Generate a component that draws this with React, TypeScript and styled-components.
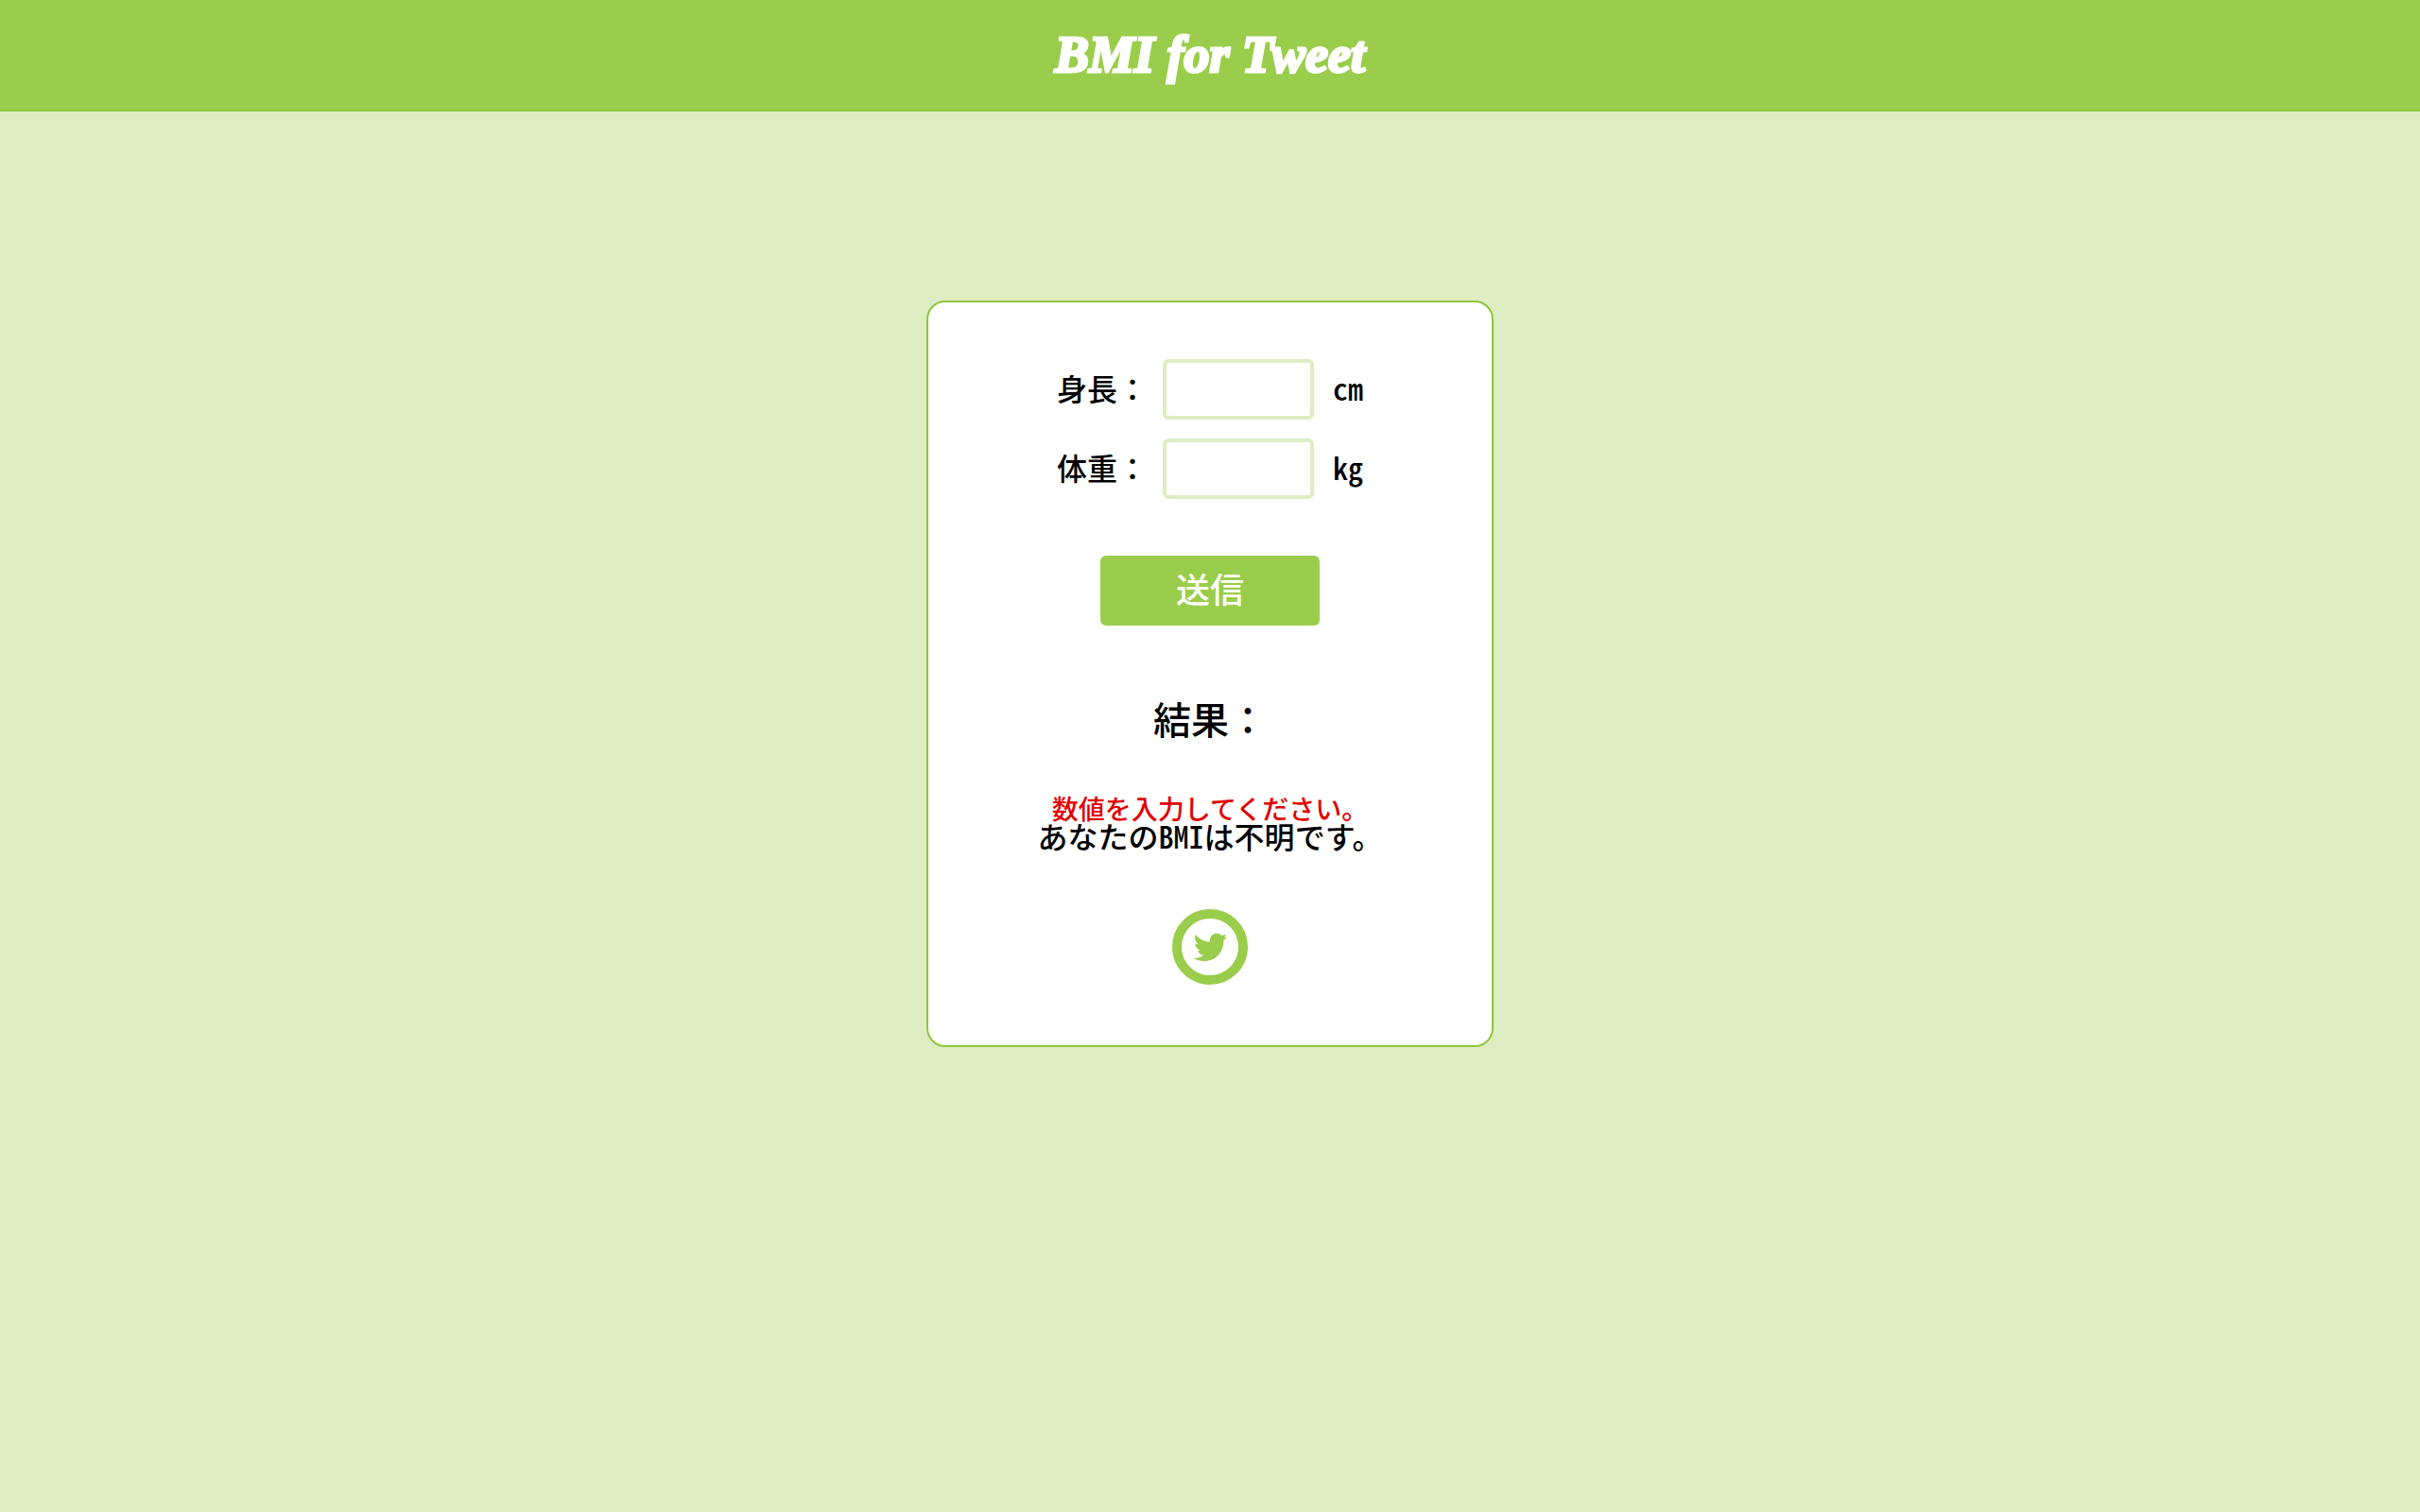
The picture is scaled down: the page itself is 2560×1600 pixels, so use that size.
import { useState } from "react";
import type { FormEvent } from "react";
import styled, { createGlobalStyle } from "styled-components";

const green = "#9acd4b";
const darkGreen = "#8ec63a";
const paleGreen = "#deecc1";

const GlobalStyle = createGlobalStyle`
  *, *::before, *::after {
    box-sizing: border-box;
  }
  body {
    margin: 0;
    min-height: 100vh;
    background: ${paleGreen};
    color: #000;
    font-family: "Noto Sans", "Noto Sans CJK JP", sans-serif;
    font-weight: 500;
  }
`;

const Header = styled.header`
  display: flex;
  justify-content: center;
  align-items: center;
  height: 118px;
  background: ${green};
  border-bottom: 2px solid ${darkGreen};
`;

const Title = styled.h1`
  margin: 0;
  color: #fff;
  font-family: "Liberation Serif", serif;
  font-size: 54px;
  font-style: italic;
  font-weight: 700;
  line-height: 60px;
  -webkit-text-stroke: 3px #fff;
`;

const Card = styled.main`
  display: flex;
  flex-direction: column;
  align-items: center;
  gap: 60px;
  width: 600px;
  max-width: 100%;
  margin: 200px auto;
  padding: 60px 20px 64px;
  background: #fff;
  border: 2px solid ${darkGreen};
  border-radius: 20px;
`;

const Form = styled.form`
  display: flex;
  flex-direction: column;
  align-items: center;
  gap: 60px;
`;

const Fields = styled.div`
  display: grid;
  gap: 20px;
`;

const Field = styled.div`
  display: flex;
  align-items: center;
  font-size: 32px;
  line-height: 32px;
`;

const HalfWidth = styled.span`
  font-family: "Noto Sans CJK JP", sans-serif;
  font-feature-settings: "hwid";
  line-height: 0;
`;

const NumberInput = styled.input`
  width: 160px;
  height: 64px;
  margin: 0 20px 0 16px;
  padding: 0 12px;
  background: #fff;
  border: 4px solid ${paleGreen};
  border-radius: 6px;
  font: inherit;
`;

const SubmitButton = styled.button`
  width: 232px;
  height: 74px;
  padding: 0;
  background: ${green};
  border: 0;
  border-radius: 6px;
  color: #fff;
  font: inherit;
  font-size: 36px;
  line-height: 36px;
  cursor: pointer;
`;

const Result = styled.section`
  display: flex;
  flex-direction: column;
  align-items: center;
  gap: 60px;
  margin-top: 20px;
`;

const ResultTitle = styled.h2`
  margin: 0;
  font-size: 40px;
  font-weight: 500;
  line-height: 40px;
`;

const Message = styled.p`
  margin: 0;
  font-size: 32px;
  line-height: 32px;
  text-align: center;
`;

const ErrorText = styled.span`
  display: block;
  color: #e00000;
  font-size: 28px;
  line-height: 28px;
`;

const TweetLink = styled.a`
  display: flex;
  justify-content: center;
  align-items: center;
  width: 80px;
  height: 80px;
  border: 10px solid ${green};
  border-radius: 50%;
  color: ${green};
`;

function Bird() {
  return (
    <svg width="50" height="44" viewBox="0 0 150 132" fill="currentColor" aria-hidden="true">
      <path d="M29 27C40 41 57 49 75 50C73 35 83 23 97 23C104 23 109 26 113 30C118 29 122 28 127 25C125 30 122 33 119 36C123 36 126 35 129 33C126 39 122 42 118 45C119 80 95 111 58 111C45 111 33 108 23 101C35 102 46 99 54 92C44 91 38 85 36 77C39 78 42 78 45 77C35 74 28 66 28 55C31 57 34 58 38 58C28 50 25 38 29 27Z" />
    </svg>
  );
}

export default function App() {
  const [height, setHeight] = useState("");
  const [weight, setWeight] = useState("");
  const [bmi, setBmi] = useState<string | null>(null);

  const submit = (event: FormEvent) => {
    event.preventDefault();
    const value = Number(weight) / (Number(height) / 100) ** 2;
    setBmi(value > 0 && Number.isFinite(value) ? value.toFixed(1) : null);
  };

  return (
    <>
      <GlobalStyle />
      <Header>
        <Title>BMI for Tweet</Title>
      </Header>
      <Card lang="ja">
        <Form onSubmit={submit}>
          <Fields>
            <Field>
              <label htmlFor="height">身長：</label>
              <NumberInput
                id="height"
                inputMode="decimal"
                value={height}
                onChange={(e) => setHeight(e.target.value)}
              />
              <div>
                <HalfWidth>cm</HalfWidth>
              </div>
            </Field>
            <Field>
              <label htmlFor="weight">体重：</label>
              <NumberInput
                id="weight"
                inputMode="decimal"
                value={weight}
                onChange={(e) => setWeight(e.target.value)}
              />
              <div>
                <HalfWidth>kg</HalfWidth>
              </div>
            </Field>
          </Fields>
          <SubmitButton type="submit">送信</SubmitButton>
        </Form>
        <Result>
          <ResultTitle>結果：</ResultTitle>
          <Message>
            {bmi === null && <ErrorText>数値を入力してください。</ErrorText>}
            あなたの<HalfWidth>BMI</HalfWidth>は{bmi ?? "不明"}です。
          </Message>
        </Result>
        <TweetLink href="#tweet" aria-label="Tweet">
          <Bird />
        </TweetLink>
      </Card>
    </>
  );
}
